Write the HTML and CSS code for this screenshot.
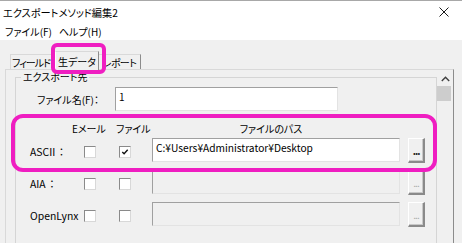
FILE: index.html
```html
<!DOCTYPE html>
<html lang="ja">
<head>
<meta charset="utf-8">
<title>エクスポートメソッド編集2</title>
<link rel="stylesheet" href="styles.css">
</head>
<body>
<div class="window">
  <div class="titlebar">
    <span class="title">エクスポートメソッド編集2</span>
    <svg class="close" width="10" height="10" viewBox="0 0 10 10"><path d="M0.5 0.5 L9.5 9.5 M9.5 0.5 L0.5 9.5" stroke="#1a1a1a" stroke-width="1" fill="none"/></svg>
  </div>
  <div class="menubar">
    <span class="menu">ファイル(F)</span>
    <span class="menu">ヘルプ(H)</span>
  </div>
  <div class="client">
    <div class="tabs">
      <div class="tab first">フィールド</div>
      <div class="tab active">生データ</div>
      <div class="tab last">レポート</div>
    </div>
    <div class="panel">
      <fieldset class="group">
        <legend class="legend">エクスポート先</legend>
        <div class="namerow">
          <span class="namelabel">ファイル名(F)：</span>
          <div class="input name">1</div>
        </div>
        <div class="headrow">
          <div class="head h-mail">Eメール</div>
          <div class="head h-file">ファイル</div>
          <div class="head h-path">ファイルのパス</div>
        </div>
        <div class="grid">
          <div class="rowlabel">ASCII<span class="colon">：</span></div>
          <div class="cbwrap"><span class="cb"></span></div>
          <div class="cbwrap"><span class="cb"><svg width="8" height="8" viewBox="0 0 8 8"><path d="M1.3 3.9 L3.1 5.7 L6.7 1.8" stroke="#111" stroke-width="1.4" fill="none"/></svg></span></div>
          <div class="input path">C:¥Users¥Administrator¥Desktop</div>
          <div class="btn">...</div>

          <div class="rowlabel">AIA<span class="colon">：</span></div>
          <div class="cbwrap"><span class="cb"></span></div>
          <div class="cbwrap"><span class="cb"></span></div>
          <div class="input path disabled"></div>
          <div class="btn disabled">...</div>

          <div class="rowlabel">OpenLynx</div>
          <div class="cbwrap"><span class="cb"></span></div>
          <div class="cbwrap"><span class="cb"></span></div>
          <div class="input path disabled"></div>
          <div class="btn disabled">...</div>
        </div>
      </fieldset>
      <div class="scrollbar">
        <div class="sb-arrow"><svg width="9" height="6" viewBox="0 0 9 6"><path d="M0.8 5 L4.5 1.3 L8.2 5" stroke="#404040" stroke-width="1.4" fill="none"/></svg></div>
        <div class="sb-thumb"></div>
      </div>
    </div>
  </div>
  <div class="hl hl-tab"></div>
  <div class="hl hl-row"></div>
</div>
</body>
</html>
```

FILE: styles.css
```css
* { box-sizing: border-box; }
html, body { margin: 0; padding: 0; }
body {
  width: 462px;
  height: 243px;
  overflow: hidden;
  background: #f0f0f0;
  font-family: "Noto Sans CJK JP", "Noto Sans", sans-serif;
  font-size: 10px;
  color: #000;
  font-feature-settings: "palt";
}
.window {
  position: relative;
  width: 462px;
  height: 243px;
  border-top: 1px solid #a8a8a8;
  overflow: hidden;
}
.titlebar {
  height: 23px;
  background: #fff;
  display: flex;
  align-items: center;
  justify-content: space-between;
  padding: 0 13px 0 3px;
}
.title { line-height: 14px; font-size: 10.2px; }
.close { display: block; margin-top: -2px; }
.menubar {
  height: 16px;
  background: #fff;
  display: flex;
  align-items: center;
  gap: 7px;
  padding-left: 5px;
}
.menu { line-height: 14px; }
.client {
  height: 203px;
  background: #f0f0f0;
  padding-top: 11px;
}
.tabs {
  display: flex;
  align-items: flex-end;
  height: 18px;
  padding-left: 10px;
  position: relative;
  z-index: 1;
}
.tab {
  height: 15px;
  width: 44px;
  border: 1px solid #d9d9d9;
  border-bottom: none;
  background: #f0f0f0;
  display: flex;
  align-items: center;
  justify-content: center;
  line-height: 13px;
  white-space: nowrap;
}
.tab.first {
  width: 47px;
  justify-content: flex-start;
  padding-left: 1px;
  letter-spacing: -1px;
}
.tab.last { letter-spacing: -0.6px; padding-left: 2px; }
.tab + .tab { margin-left: -2px; }
.tab.active {
  height: 19px;
  width: 44px;
  margin-bottom: -1px;
  background: #f0f0f0;
  border-color: #d9d9d9 #8c8c8c #f0f0f0 #fff;
  position: relative;
  z-index: 2;
  padding-top: 1px;
}
.tab.active + .tab { border-left: none; border-right-color: #8c8c8c; }
.panel {
  margin: 0 8px 0 5px;
  height: 200px;
  border: 1px solid #d9d9d9;
  border-right-color: #8c8c8c;
  border-bottom: none;
  display: flex;
  align-items: flex-start;
  padding-left: 9px;
}
.group {
  margin: 0;
  width: 422px;
  height: 240px;
  padding: 0 0 0 14px;
  border: 1px solid #d5d5d5;
  min-width: 0;
}
.legend {
  margin-left: -9px;
  padding: 0 2px;
  line-height: 14px;
}
.namerow {
  display: flex;
  align-items: center;
  margin-top: 3px;
  height: 24px;
  padding-left: 7px;
}
.namelabel {
  width: 78px;
  line-height: 14px;
  white-space: nowrap;
  padding-top: 2px;
}
.input {
  height: 24px;
  background: #fff;
  border-top: 1px solid #a0a0a0;
  border-left: 1px solid #a0a0a0;
  border-right: 1px solid #e3e3e3;
  border-bottom: 1px solid #e3e3e3;
  padding: 2px 3px 0;
  line-height: 14px;
  white-space: nowrap;
  overflow: hidden;
}
.input.name { width: 223px; }
.input.path { font-size: 10.2px; }
.input.disabled { background: #f0f0f0; }
.headrow, .grid {
  display: grid;
  grid-template-columns: 54px 35px 33px 248px 25px;
}
.headrow {
  height: 18px;
  margin-top: 9px;
  align-items: center;
}
.grid {
  grid-template-rows: 24px 24px 24px;
  row-gap: 8px;
}
.head {
  line-height: 14px;
  white-space: nowrap;
}
.h-mail { grid-column: 1 / 3; padding-left: 42px; }
.h-file { grid-column: 3; margin-left: -3px; }
.h-path { grid-column: 4; text-align: center; padding-right: 10px; }
.rowlabel {
  line-height: 14px;
  align-self: center;
  margin-top: 4px;
  white-space: nowrap;
  font-size: 10.4px;
}
.colon { font-feature-settings: normal; margin-left: 1px; }
.cbwrap {
  display: flex;
  align-items: center;
  padding-top: 4px;
}
.cb {
  width: 12px;
  height: 12px;
  background: #fff;
  border-top: 1px solid #8a8a8a;
  border-left: 1px solid #8a8a8a;
  border-right: 1px solid #d8d8d8;
  border-bottom: 1px solid #d8d8d8;
  display: flex;
  align-items: center;
  justify-content: center;
}
.cb svg { display: block; }
.btn {
  margin-left: 8px;
  width: 17px;
  height: 25px;
  background: #f0f0f0;
  border-top: 1px solid #fff;
  border-left: 1px solid #fff;
  border-right: 2px solid #8a8a8a;
  border-bottom: 2px solid #8a8a8a;
  box-shadow: inset -1px -1px 0 #c8c8c8;
  font-size: 10px;
  line-height: 14px;
  text-align: center;
  padding-top: 5px;
  letter-spacing: -1px;
  font-weight: bold;
  color: #222;
}
.btn.disabled { color: #a8a8a8; font-weight: normal; }
.scrollbar {
  margin-top: 2px;
  width: 16px;
  height: 180px;
  background: #f0f0f0;
}
.sb-arrow {
  height: 14px;
  display: flex;
  align-items: center;
  justify-content: center;
}
.sb-arrow svg { display: block; }
.sb-thumb {
  width: 14px;
  height: 15px;
  background: #cdcdcd;
}
.hl {
  position: absolute;
  border: 4px solid #ef1ec1;
  pointer-events: none;
  z-index: 10;
}
.hl-tab {
  left: 51px;
  top: 42px;
  width: 55px;
  height: 31px;
  border-radius: 6px;
}
.hl-row {
  left: 11px;
  top: 113px;
  width: 426px;
  height: 58px;
  border-radius: 12px;
}
```
